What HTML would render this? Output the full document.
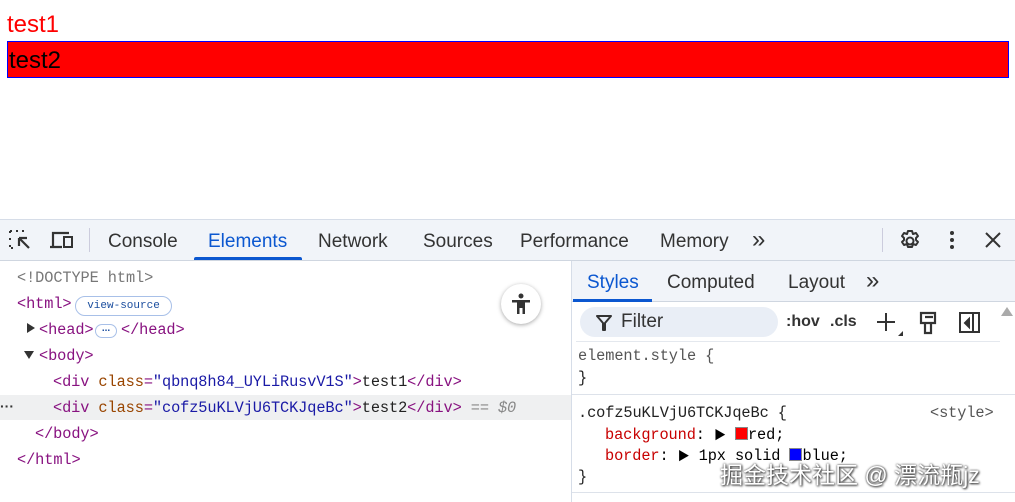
<!DOCTYPE html>
<html><head><meta charset="utf-8"><style>
*{margin:0;padding:0;box-sizing:border-box}
body{width:1015px;height:502px;overflow:hidden;background:#fff;position:relative;font-family:"Liberation Sans",sans-serif}
.a{position:absolute;white-space:nowrap}
.m{font-family:"Liberation Mono","Noto Sans CJK SC",monospace;font-size:15.3px;letter-spacing:-0.1px}
.tag{color:#881280}.at{color:#994500}.av{color:#1a1aa6}.tx{color:#222}
.tab{font-size:19px;color:#333;top:231px}
</style></head><body>
<div class="a" style="left:7px;top:11px;font-size:24px;color:#f00">test1</div>
<div class="a" style="left:7px;top:41px;width:1002px;height:37px;background:#f00;border:1px solid #00f;font-size:24px;color:#000;padding-left:1px;line-height:38px">test2</div>

<div class="a" style="left:0;top:219px;width:1015px;height:42px;background:#f1f4f9;border-top:1px solid #d6dde8;border-bottom:1px solid #cfd6e0"></div>
<svg class="a" style="left:8px;top:229px" width="24" height="22" viewBox="0 0 24 22"><path d="M2 2h3M8 2h3M14 2h3M2 2v3M2 9v3M2 16v3h3" stroke="#333" stroke-width="2" fill="none" stroke-dasharray="2 2"/><path d="M11 9l8 0M11 9v8M11 9l10 10" stroke="#333" stroke-width="2.2" fill="none"/></svg>
<svg class="a" style="left:49px;top:229px" width="26" height="22" viewBox="0 0 26 22"><path d="M4 17V4h16M1 18h12" stroke="#333" stroke-width="2.2" fill="none"/><rect x="15" y="8" width="8" height="10" stroke="#333" stroke-width="2" fill="none"/></svg>
<div class="a" style="left:89px;top:228px;width:1px;height:24px;background:#ccd"></div>
<div class="a tab" style="left:108px">Console</div>
<div class="a tab" style="left:208px;color:#0b57d0">Elements</div>
<div class="a" style="left:194px;top:257px;width:108px;height:3px;background:#0b57d0;border-radius:2px 2px 0 0"></div>
<div class="a tab" style="left:318px">Network</div>
<div class="a tab" style="left:423px">Sources</div>
<div class="a tab" style="left:520px">Performance</div>
<div class="a tab" style="left:660px">Memory</div>
<div class="a tab" style="left:752px;font-size:24px;top:226px">&#187;</div>
<div class="a" style="left:882px;top:228px;width:1px;height:24px;background:#ccd"></div>
<svg class="a" style="left:898px;top:229px" width="24" height="24" viewBox="0 0 24 24"><circle cx="12" cy="12" r="3.5" stroke="#333" stroke-width="2" fill="none"/><path d="M10 2h4l1 3 3-1 2 3-2 2 0 2 2 2-2 3-3-1-1 3h-4l-1-3-3 1-2-3 2-2v-2l-2-2 2-3 3 1z" stroke="#333" stroke-width="2" fill="none" stroke-linejoin="round"/></svg>
<div class="a" style="left:950px;top:231px;width:4px;height:4px;background:#333;border-radius:2px;box-shadow:0 7px 0 #333,0 14px 0 #333"></div>
<svg class="a" style="left:984px;top:231px" width="18" height="18"><path d="M2 2l14 14M16 2L2 16" stroke="#333" stroke-width="2"/></svg>

<div class="a" style="left:571px;top:261px;width:1px;height:241px;background:#d6dde8"></div>
<div class="a" style="left:572px;top:261px;width:443px;height:41px;background:#f1f4f9;border-bottom:1px solid #cfd6e0"></div>
<div class="a tab" style="left:587px;top:272px;color:#0b57d0">Styles</div>
<div class="a" style="left:573px;top:299px;width:79px;height:3px;background:#0b57d0"></div>
<div class="a tab" style="left:667px;top:272px">Computed</div>
<div class="a tab" style="left:788px;top:272px">Layout</div>
<div class="a tab" style="left:866px;top:267px;font-size:24px">&#187;</div>
<div class="a" style="left:580px;top:307px;width:198px;height:30px;background:#e9eef6;border-radius:15px"></div>
<svg class="a" style="left:596px;top:315px" width="16" height="16"><path d="M1 1h14L9 8v7H7V8z" fill="none" stroke="#333" stroke-width="2" stroke-linejoin="round"/></svg>
<div class="a" style="left:621px;top:311px;font-size:19px;color:#333">Filter</div>
<div class="a" style="left:786px;top:313px;font-size:16px;font-weight:bold;color:#333">:hov</div>
<div class="a" style="left:830px;top:313px;font-size:16px;font-weight:bold;color:#333">.cls</div>
<svg class="a" style="left:876px;top:311px" width="28" height="26"><path d="M10 2v18M1 11h18" stroke="#333" stroke-width="2"/><path d="M22 25h5v-5z" fill="#333"/></svg>
<svg class="a" style="left:918px;top:311px" width="22" height="24"><path d="M3 2h14v10H3z M7 12v10h6V12 M7 6h8" stroke="#333" stroke-width="2.2" fill="none"/></svg>
<svg class="a" style="left:958px;top:311px" width="24" height="24"><rect x="2" y="2" width="19" height="19" stroke="#333" stroke-width="2" fill="none"/><path d="M15 2v19M11 8l-4 4 4 4z" stroke="#333" stroke-width="2" fill="#333"/></svg>
<div class="a" style="left:1001px;top:307px;border:6px solid transparent;border-bottom:9px solid #aaa;border-top:0"></div>
<div class="a" style="left:576px;top:341px;width:424px;height:1px;background:#e4e8ee"></div>

<div class="a" style="left:0;top:395px;width:571px;height:25px;background:#eff0f1"></div>
<div class="a m" style="left:17px;top:269px;color:#777">&lt;!DOCTYPE html&gt;</div>
<div class="a m tag" style="left:17px;top:295px">&lt;html&gt;</div>
<div class="a" style="left:75px;top:296px;width:97px;height:20px;border:1px solid #a8c0e8;border-radius:10px;font-family:'Liberation Mono',monospace;font-size:11px;color:#1a4d9e;text-align:center;line-height:18px">view-source</div>
<div class="a" style="left:27px;top:323px;border:5px solid transparent;border-left:8px solid #333;border-right:0"></div>
<div class="a m tag" style="left:39px;top:321px">&lt;head&gt;</div>
<div class="a" style="left:95px;top:324px;width:22px;height:14px;border:1px solid #a8c0e8;border-radius:7px;font-size:10px;color:#1a4d9e;text-align:center;line-height:8px;font-weight:bold">...</div>
<div class="a m tag" style="left:121px;top:321px">&lt;/head&gt;</div>
<div class="a" style="left:24px;top:351px;border:5px solid transparent;border-top:8px solid #333;border-bottom:0"></div>
<div class="a m tag" style="left:39px;top:347px">&lt;body&gt;</div>
<div class="a m" style="left:53px;top:373px"><span class="tag">&lt;div </span><span class="at">class</span><span class="tag">=</span><span class="av">"qbnq8h84_UYLiRusvV1S"</span><span class="tag">&gt;</span><span class="tx">test1</span><span class="tag">&lt;/div&gt;</span></div>
<div class="a" style="left:0;top:398px;font-size:14px;color:#333;font-weight:bold">···</div>
<div class="a m" style="left:53px;top:399px"><span class="tag">&lt;div </span><span class="at">class</span><span class="tag">=</span><span class="av">"cofz5uKLVjU6TCKJqeBc"</span><span class="tag">&gt;</span><span class="tx">test2</span><span class="tag">&lt;/div&gt;</span><span style="color:#888;font-style:italic"> == $0</span></div>
<div class="a m tag" style="left:35px;top:425px">&lt;/body&gt;</div>
<div class="a m tag" style="left:17px;top:451px">&lt;/html&gt;</div>
<div class="a" style="left:501px;top:284px;width:40px;height:40px;border-radius:50%;background:#fff;box-shadow:0 1px 4px rgba(0,0,0,.35)"></div>
<svg class="a" style="left:509px;top:292px" width="24" height="24"><circle cx="12" cy="4" r="2.5" fill="#333"/><path d="M3 8h18v2.5h-5V22h-2.5v-6h-3v6H8V10.5H3z" fill="#333"/></svg>

<div class="a m" style="left:578px;top:347px;color:#555">element.style {</div>
<div class="a m" style="left:578px;top:369px;color:#222">}</div>
<div class="a" style="left:572px;top:394px;width:443px;height:1px;background:#dde2ea"></div>
<div class="a m" style="left:578px;top:404px;color:#222">.cofz5uKLVjU6TCKJqeBc {</div>
<div class="a m" style="left:930px;top:404px;color:#555">&lt;style&gt;</div>
<div class="a m" style="left:605px;top:426px"><span style="color:#c80000">background</span>: <span style="font-size:12px">&#9654;</span> <span style="display:inline-block;width:13px;height:13px;background:#f00;border:1px solid #888;vertical-align:-1px"></span>red;</div>
<div class="a m" style="left:605px;top:447px"><span style="color:#c80000">border</span>: <span style="font-size:12px">&#9654;</span> 1px solid <span style="display:inline-block;width:13px;height:13px;background:#00f;border:1px solid #888;vertical-align:-1px"></span>blue;</div>
<div class="a m" style="left:578px;top:468px;color:#222">}</div>
<div class="a" style="left:572px;top:492px;width:443px;height:1px;background:#dde2ea"></div>
<div class="a" style="left:720px;top:456px;font-size:23px;color:#fff;font-family:'Liberation Sans','Noto Sans CJK SC',sans-serif;text-shadow:0 0 2px #333,1px 1px 2px #333">掘金技术社区 @ 漂流瓶jz</div>
</body></html>
